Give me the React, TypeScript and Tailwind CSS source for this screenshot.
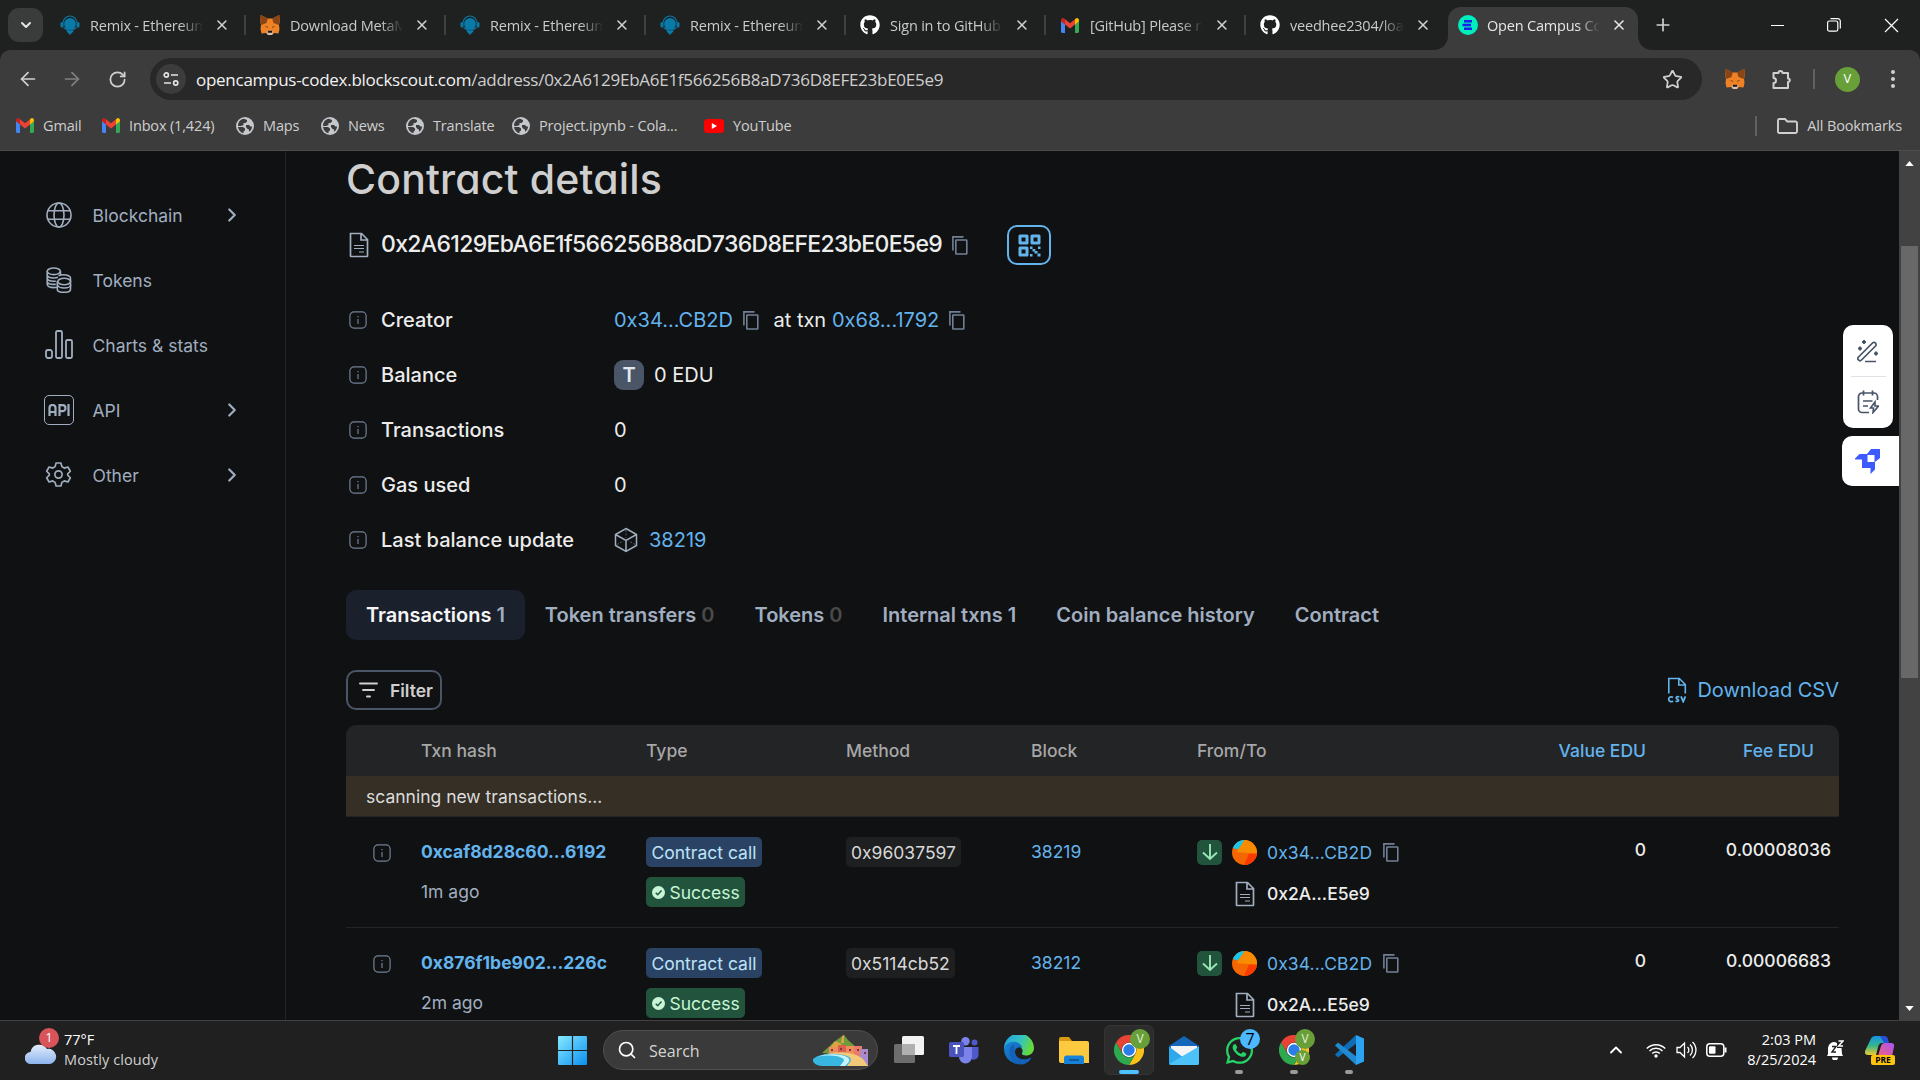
import React from "react";
import {
  ArrowLeft,
  ArrowRight,
  ChevronDown,
  ChevronRight,
  ChevronUp,
  Plus,
  RotateCw,
  Search,
  Star,
  X,
} from "lucide-react";
import { FaGithub, FaWhatsapp } from "react-icons/fa";

/* ---------- Brand marks ---------- */

const RemixLogo = () => (
  <svg viewBox="0 0 20 20" className="size-5 shrink-0">
    <path d="M3 8a7 7 0 0 1 14 0" fill="none" stroke="#0a7aa8" strokeWidth="1.2" />
    <rect x="0.5" y="7" width="3" height="5.5" rx="1.5" fill="#0a7aa8" />
    <rect x="16.5" y="7" width="3" height="5.5" rx="1.5" fill="#0a7aa8" />
    <circle cx="10" cy="9" r="5.9" fill="#0a7aa8" />
    <path d="M3.5 12.5 10 16.5l6.500-4" fill="none" stroke="#0a7aa8" strokeWidth="1.2" />
    <path d="M6 15.800h8L10 20z" fill="#0a7aa8" />
  </svg>
);

const FoxLogo = () => (
  <svg viewBox="0 0 20 20" className="size-5 shrink-0">
    <path d="M.8 0 7.500 3.500h5L19.200 0 19.800 6 19 10l.5 4-1 4.500-4.500-.5-2 2H8l-2-2-4.500.5-1-4.500.5-4L.2 6z" fill="#f08226" />
    <path d="M.8 0 7.800 3.600 6.500 8 1.500 10 .2 6zM19.200 0 12.200 3.600l1.300 4.400 5 2 1.300-4z" fill="#8a4517" />
    <path d="m4.500 11 3.200.4.300 1.800zM15.500 11l-3.200.4-.3 1.800z" fill="#8a4a1c" />
    <path d="m6.500 17 1.500-1.300h4l1.500 1.300-1.500 3H8z" fill="#d7c1b3" />
    <path d="M8 15.700h4l.3 2H7.700z" fill="#161616" />
  </svg>
);

const GmailLogo = () => (
  <svg viewBox="0 0 18 14" className="h-[15px] w-[18px] shrink-0" preserveAspectRatio="none">
    <path d="M0 2.500V12.700A1.300 1.300 0 0 0 1.300 14H4V5.300z" fill="#4285f4" />
    <path d="M18 2.500V12.700a1.300 1.300 0 0 1-1.300 1.300H14V5.300z" fill="#34a853" />
    <path d="M14 1.200V6l4-3V2a2 2 0 0 0-3.200-1.500z" fill="#fbbc04" />
    <path d="M4 6V1.200l5 3.800 5-3.800V6L9 9.800z" fill="#ea4335" />
    <path d="M0 2v1l4 3V1.200L3.200.500A2 2 0 0 0 0 2z" fill="#c5221f" />
  </svg>
);

const GlobeMark = () => (
  <svg viewBox="0 0 18 18" className="size-[18px] shrink-0">
    <circle cx="9" cy="9" r="9" fill="#c4c7cc" />
    <path d="M8 1.800 11 3v1.500L9.500 6H7.500v2L5 9H2.200L2 8C2.500 4.500 5 2 8 1.800zM2 10h5l2 1.500v2L7.500 14.500v1.800C4.500 15.500 2.300 13 2 10z" fill="#3c3c3c" />
    <path d="M10 8h3l1.500 1.500h1.700A7 7 0 0 1 13 14.800V12.500L11.500 12 10 10z" fill="#3c3c3c" />
  </svg>
);

const YouTubeLogo = () => (
  <svg viewBox="0 0 20 14" className="h-[14px] w-5 shrink-0">
    <rect width="20" height="14" rx="3.500" fill="#f00" />
    <path d="M7.800 4v6l5.200-3z" fill="#fff" />
  </svg>
);

const OpenCampusLogo = () => (
  <svg viewBox="0 0 20 20" className="size-5 shrink-0">
    <circle cx="10" cy="10" r="10" fill="#00edbe" />
    <path d="M6 5h8v2.600H6zM4.500 8.700h8.500v2.600H4.500zM6 12.400h8V15H6z" fill="#1a1fe8" />
  </svg>
);

/* ---------- Page glyphs ---------- */

const InfoIcon = () => (
  <svg viewBox="0 0 18 18" className="mt-px size-[18px] shrink-0" fill="none" stroke="#718096">
    <rect x="0.900" y="0.900" width="16.200" height="16.200" rx="4" strokeWidth="1.200" />
    <path d="M9 8v5M9 5v1.200" strokeWidth="1.200" />
  </svg>
);

const CopyIcon = () => (
  <svg viewBox="0 0 16 19" className="mt-px h-[19px] w-4 shrink-0" fill="none" stroke="#718096" strokeWidth="1.600">
    <path d="M.900 14.500V.900H11.500" />
    <rect x="3.800" y="4" width="11" height="14" rx=".5" />
  </svg>
);

const DocIcon = () => (
  <svg viewBox="0 0 20 26" className="h-[26px] w-5 shrink-0" fill="none" stroke="#a0aec0" strokeWidth="1.700">
    <path d="M1.500 1.500h11l6 6V24a.5.5 0 0 1-.5.5H2a.5.5 0 0 1-.5-.5zM12 1.500V8h6.500" />
    <path d="M5 13.500h10M5 16.500h10M10 20h5" strokeWidth="1.200" />
  </svg>
);

const CsvIcon = () => (
  <svg viewBox="0 0 20 26" className="h-[26px] w-5 shrink-0" fill="none" stroke="#63b3ed" strokeWidth="1.600">
    <path d="M1.800 16.500V1.500h10.500l6 6v9M11.800 1.500V8h6.500" />
    <path d="M6 20.500c-2-1.500-4.300-.3-4.300 1.800s2.300 3.200 4.300 1.700M12.300 20c-3.300-1-3.800 1.500-2 2s1.800 3-1.800 2.200M14 19.300l2.200 5.300 2.200-5.300" strokeWidth="1.800" />
  </svg>
);

const CubeIcon = () => (
  <svg viewBox="0 0 24 26" className="h-[26px] w-6 shrink-0" fill="none" stroke="#a0aec0" strokeWidth="1.500">
    <path d="M12 1.500 22.500 7.500v11L12 24.500 1.500 18.500v-11zM1.500 7.500 12 13.500l10.500-6M12 13.500v11" />
    <path d="M12 3v8M3 17.500l6.500-3.700M21 17.500l-6.500-3.700" strokeWidth=".5" strokeDasharray="2 1.500" />
  </svg>
);

const QrIcon = () => (
  <svg viewBox="0 0 23 23" className="size-[23px]" fill="#63b3ed">
    <path fillRule="evenodd" d="M2 .5h7A1.500 1.500 0 0 1 10.500 2v7A1.500 1.500 0 0 1 9 10.500H2A1.500 1.500 0 0 1 .5 9V2A1.500 1.500 0 0 1 2 .5zM3.500 3.500v4h4v-4zM14 .5h7A1.500 1.500 0 0 1 22.500 2v7a1.500 1.500 0 0 1-1.500 1.500h-7A1.500 1.500 0 0 1 12.500 9V2A1.500 1.500 0 0 1 14 .5zM15.500 3.500v4h4v-4zM2 12.500h7a1.500 1.500 0 0 1 1.500 1.500v7A1.500 1.500 0 0 1 9 22.500H2A1.500 1.500 0 0 1 .5 21v-7A1.500 1.500 0 0 1 2 12.500zM3.500 15.500v4h4v-4z" />
    <path d="M12 12.500h2.500V15H12zM20 12.500h2.500V15H20zM14.500 15h2.800v2h2.200v2.500h-3V17.500h-2zM12 20h2.500v2.500H12zM19.500 19.500h3v3h-3z" />
  </svg>
);

const BlockchainIcon = () => (
  <svg viewBox="0 0 26 26" className="size-[26px]" fill="none" stroke="#a0aec0" strokeWidth="1.600">
    <circle cx="13" cy="13" r="12" />
    <ellipse cx="13" cy="13" rx="5" ry="12" />
    <path d="M2 8.700h22M2 17.300h22" />
  </svg>
);

const TokensIcon = () => (
  <svg viewBox="0 0 26 26" className="size-[26px]" fill="none" stroke="#a0aec0" strokeWidth="1.600">
    <ellipse cx="7.800" cy="4.300" rx="6.600" ry="3.300" />
    <path d="M1.200 4.300v13c0 1.900 3 3.300 6.600 3.300 1 0 2-.1 3-.4M14.400 4.300v4M1.200 7.800c0 1.900 3 3.200 6.600 3.200 1.500 0 3-.2 4.200-.7M1.200 11c0 1.900 3 3.200 6.600 3.200h2M1.200 14.200c0 1.900 3 3.200 6.600 3.200h2" />
    <path d="M12.500 8.800c4-2 12-1 12 2.400v11c0 1.900-3 3.200-6.600 3.200s-6.600-1.300-6.600-3.200V14" />
    <ellipse cx="18.200" cy="14.500" rx="6.400" ry="3.300" />
    <path d="M11.600 17.700c0 1.900 3 3.300 6.600 3.300s6.600-1.400 6.600-3.300" />
  </svg>
);

const ChartsIcon = () => (
  <svg viewBox="0 0 28 29" className="h-[29px] w-7" fill="none" stroke="#a0aec0" strokeWidth="1.800">
    <rect x="1" y="20" width="6" height="8" rx="2" />
    <rect x="11" y="1" width="6" height="27" rx="1.500" />
    <rect x="21" y="10" width="6" height="18" rx="1.500" />
  </svg>
);

const ApiIcon = () => (
  <div className="flex h-[30px] w-[30px] items-center justify-center rounded-[5px] border-[1.5px] border-[#a0aec0]">
    <svg viewBox="0 0 22 12" className="h-3 w-[22px]" fill="none" stroke="#a0aec0" strokeWidth="2.200">
      <path d="M1.500 12V4a3 3 0 0 1 6 0v8M1.500 8h6M11.500 12V1.200h3a2.500 2.500 0 0 1 0 6h-3M20.500 0v12" />
    </svg>
  </div>
);

const GearIcon = () => (
  <svg viewBox="0 0 24 24" className="size-[29px]" fill="none" stroke="#a0aec0" strokeWidth="1.400" strokeLinejoin="round">
    <path d="M10 2.500h4l.8 3 2 1.200 3-.9 2 3.500-2.200 2.100v1.200l2.200 2.100-2 3.500-3-.9-2 1.200-.8 3h-4l-.8-3-2-1.200-3 .9-2-3.500 2.200-2.100v-1.200L2.200 9.300l2-3.500 3 .9 2-1.200z" />
    <circle cx="12" cy="12" r="3" />
  </svg>
);

const CheckMark = () => (
  <svg viewBox="0 0 14 14" className="size-[13px]">
    <circle cx="7" cy="7" r="7" fill="#c6f6d5" />
    <path d="m4 7.200 2.200 2.200 4-4.500" fill="none" stroke="#22543d" strokeWidth="1.600" />
  </svg>
);

const Identicon = () => (
  <div className="size-[25px] overflow-hidden rounded-full">
    <svg viewBox="0 0 25 25" className="size-[25px]">
      <rect width="25" height="25" fill="#f56600" />
      <path d="M12 0h13v14L4.500 12z" fill="#f78c00" />
      <path d="M0 0h12.500L6 9.500 1 8z" fill="#18c8ee" />
      <path d="M17 13.500h8V25H12z" fill="#fb3a00" />
    </svg>
  </div>
);

/* ---------- Browser chrome ---------- */

const tabs = [
  { title: "Remix - Ethereum IDE", icon: <RemixLogo /> },
  { title: "Download MetaMask", icon: <FoxLogo /> },
  { title: "Remix - Ethereum IDE", icon: <RemixLogo /> },
  { title: "Remix - Ethereum IDE", icon: <RemixLogo /> },
  { title: "Sign in to GitHub · GitHub", icon: <FaGithub className="size-5 text-white" /> },
  { title: "[GitHub] Please reset", icon: <GmailLogo /> },
  { title: "veedhee2304/loan", icon: <FaGithub className="size-5 text-white" /> },
];

const fade = "[mask-image:linear-gradient(to_right,black_80%,transparent_100%)]";

function TabStrip() {
  return (
    <div className="flex h-[50px] bg-[#1f2120] pl-2">
      <div className="mt-2 flex h-[34px] w-[35px] items-center justify-center rounded-[11px] bg-[#3a3b3b]">
        <ChevronDown className="size-4 text-[#e3e3e3]" strokeWidth={3} />
      </div>
      <div className="ml-[3px] flex w-[1402px]">
        {tabs.map((t, i) => (
          <div key={i} className="flex h-[50px] w-[200px] shrink-0 items-center pl-[14px]">
            <div className="flex w-5 justify-center">{t.icon}</div>
            <div className={"ml-[10px] w-[114px] overflow-hidden whitespace-nowrap pt-px text-[14.5px] tracking-[-0.2px] text-[#c8c9c9] " + fade}>{t.title}</div>
            <X className="ml-[11px] size-[16px] text-[#d0d0d0]" strokeWidth={2.4} />
            {i < 6 && <div className="ml-[14px] h-5 w-0.5 bg-[#3f4040]" />}
          </div>
        ))}
      </div>
      <div className="relative mt-[7px] flex h-[43px] w-[190px] items-center rounded-t-[13px] bg-[#3c3c3c] pb-[7px] pl-[10px]">
        <svg viewBox="0 0 14 14" className="absolute -left-[14px] bottom-0 size-[14px]"><path d="M14 0v14H0A14 14 0 0 0 14 0z" fill="#3c3c3c" /></svg>
        <svg viewBox="0 0 14 14" className="absolute -right-[14px] bottom-0 size-[14px]"><path d="M0 0v14h14A14 14 0 0 1 0 0z" fill="#3c3c3c" /></svg>
        <OpenCampusLogo />
        <div className={"ml-[9px] w-[113px] overflow-hidden whitespace-nowrap pt-px text-[14.5px] tracking-[-0.2px] text-[#e6e6e6] " + fade}>Open Campus Codex</div>
        <X className="ml-[11px] size-[16px] text-[#e6e6e6]" strokeWidth={2.4} />
      </div>
      <Plus className="ml-[15px] mt-[15px] size-5 text-[#d0d0d0]" strokeWidth={2} />
      <div className="ml-auto mr-[21px] flex items-center gap-[43px]">
        <div className="h-px w-[13px] bg-white" />
        <svg viewBox="0 0 14 14" className="size-[14px]" fill="none" stroke="#fff" strokeWidth="1.200">
          <rect x="0.600" y="3" width="10.200" height="10.200" rx="1.800" />
          <path d="M3.500.700h7.300a2.500 2.500 0 0 1 2.500 2.500v7.300" />
        </svg>
        <svg viewBox="0 0 15 15" className="size-[15px]" stroke="#fff" strokeWidth="1.200"><path d="m1 1 13 13M14 1 1 14" /></svg>
      </div>
    </div>
  );
}

function Toolbar() {
  return (
    <div className="bg-[#1f2120]">
      <div className="flex h-[50px] items-center rounded-t-[10px] bg-[#3c3c3c] pt-2">
        <ArrowLeft className="ml-[17px] size-[22px] text-[#d0d0d0]" strokeWidth={1.900} />
        <ArrowRight className="ml-[22px] size-[22px] text-[#808080]" strokeWidth={1.900} />
        <RotateCw className="ml-[25px] size-[19px] text-[#d0d0d0]" strokeWidth={2.200} />
        <div className="ml-[23px] flex h-[42px] w-[1552px] items-center rounded-full bg-[#282828] pl-[6px]">
          <div className="flex size-[30px] items-center justify-center rounded-full bg-[#3c3c3c]">
            <svg viewBox="0 0 16 16" className="size-4" fill="none" stroke="#e3e3e3" strokeWidth="1.700">
              <circle cx="3.300" cy="4" r="2.100" />
              <path d="M8 4h7M1 12h7" />
              <circle cx="12.700" cy="12" r="2.100" />
            </svg>
          </div>
          <div className="ml-[10px] whitespace-nowrap pt-px text-[17px] tracking-[-0.27px] text-[#cfcfcf]">
            <span className="text-[#f2f2f2]">opencampus-codex.blockscout.com</span>/address/0x2A6129EbA6E1f566256B8aD736D8EFE23bE0E5e9
          </div>
          <Star className="ml-auto mr-[19px] size-[21px] text-[#d0d0d0]" strokeWidth={2} />
        </div>
        <div className="ml-[23px]"><FoxLogo /></div>
        <svg viewBox="0 0 22 22" className="ml-[26px] size-[22px]" fill="none" stroke="#d0d0d0" strokeWidth="2">
          <path d="M2.500 5H7.500a2 2 0 0 1 4 0H17v5.500a1.700 1.700 0 0 1 0 3.600V20H2.500v-5a2.500 2.500 0 0 0 0-5z" strokeLinejoin="round" />
        </svg>
        <div className="ml-5 h-5 w-0.5 bg-[#5f6060]" />
        <div className="ml-5 flex size-[25px] items-center justify-center rounded-full bg-[#689f38] text-[13px] text-white">V</div>
        <div className="ml-[31px] flex flex-col gap-[3px]">
          {[0, 1, 2].map((i) => <div key={i} className="size-1 rounded-full bg-[#d0d0d0]" />)}
        </div>
      </div>
    </div>
  );
}

const bookmarks = [
  { label: "Gmail", icon: <GmailLogo />, box: "w-[86px]" },
  { label: "Inbox (1,424)", icon: <GmailLogo />, box: "w-[134px]" },
  { label: "Maps", icon: <GlobeMark />, box: "w-[85px]" },
  { label: "News", icon: <GlobeMark />, box: "w-[85px]" },
  { label: "Translate", icon: <GlobeMark />, box: "w-[106px]" },
  { label: "Project.ipynb - Cola...", icon: <GlobeMark />, box: "w-[192px]" },
  { label: "YouTube", icon: <YouTubeLogo />, box: "w-[120px]" },
];

function Bookmarks() {
  return (
    <div className="flex h-[51px] items-center border-b border-[#4b4c4c] bg-[#3c3c3c] pl-4 pt-px text-[14.500px] text-[#cfcfcf]">
      {bookmarks.map((b) => (
        <div key={b.label} className={"flex shrink-0 items-center gap-[9px] whitespace-nowrap tracking-[-0.15px] " + b.box}>
          {b.icon}
          <span>{b.label}</span>
        </div>
      ))}
      <div className="ml-auto flex items-center">
        <div className="h-5 w-0.5 bg-[#5f6060]" />
        <svg viewBox="0 0 21 16" className="ml-5 h-4 w-[21px]" fill="none" stroke="#d0d0d0" strokeWidth="1.900">
          <path d="M1 13V2.500A1.500 1.500 0 0 1 2.500 1H8l2.300 2.500h8A1.500 1.500 0 0 1 20 5v8.500a1.500 1.500 0 0 1-1.500 1.500h-16A1.500 1.500 0 0 1 1 13z" />
        </svg>
        <span className="ml-[9px] mr-[18px] whitespace-nowrap tracking-[-0.15px]">All Bookmarks</span>
      </div>
    </div>
  );
}

/* ---------- Explorer page ---------- */

const nav = [
  { label: "Blockchain", icon: <BlockchainIcon />, more: true },
  { label: "Tokens", icon: <TokensIcon />, more: false },
  { label: "Charts & stats", icon: <ChartsIcon />, more: false },
  { label: "API", icon: <ApiIcon />, more: true },
  { label: "Other", icon: <GearIcon />, more: true },
];

function Sidebar() {
  return (
    <div className="flex w-[286px] shrink-0 flex-col border-r border-[#222324] pt-[31px]">
      {nav.map((n) => (
        <div key={n.label} className="flex h-[65px] items-center pl-[43.5px] text-[#a0aec0]">
          <div className="flex w-[30px] justify-center">{n.icon}</div>
          <div className="ml-[19px] w-32 pt-[3px] text-[17.500px]">{n.label}</div>
          {n.more && <ChevronRight className="size-[22px]" strokeWidth={2.400} />}
        </div>
      ))}
    </div>
  );
}

const details: { label: string; value: React.ReactNode }[] = [
  {
    label: "Creator",
    value: (
      <>
        <span className="w-[128.5px] text-[#63b3ed]">0x34...CB2D</span>
        <CopyIcon />
        <span className="ml-[15px] w-[58.5px]">at txn</span>
        <span className="w-[116.5px] text-[#63b3ed]">0x68...1792</span>
        <CopyIcon />
      </>
    ),
  },
  {
    label: "Balance",
    value: (
      <>
        <span className="mr-[10px] flex size-[30px] items-center justify-center rounded-[9px] bg-[#4a5568] font-semibold text-[#e2e8f0]">T</span>
        0 EDU
      </>
    ),
  },
  { label: "Transactions", value: "0" },
  { label: "Gas used", value: "0" },
  {
    label: "Last balance update",
    value: (
      <>
        <CubeIcon />
        <span className="ml-[11px] text-[#63b3ed]">38219</span>
      </>
    ),
  },
];

const pageTabs = [
  { label: "Transactions", count: "1", tone: "text-[#a0aec0]", box: "bg-[#1a202c] text-[#f5f5f5]" },
  { label: "Token transfers", count: "0", tone: "text-[#4a4a4b]", box: "text-[#a0aec0]" },
  { label: "Tokens", count: "0", tone: "text-[#4a4a4b]", box: "text-[#a0aec0]" },
  { label: "Internal txns", count: "1", tone: "text-[#a0aec0]", box: "text-[#a0aec0]" },
  { label: "Coin balance history", count: "", tone: "", box: "text-[#a0aec0]" },
  { label: "Contract", count: "", tone: "", box: "text-[#a0aec0]" },
];

const rows = [
  { hash: "0xcaf8d28c60...6192", ago: "1m ago", method: "0x96037597", block: "38219", fee: "0.00008036" },
  { hash: "0x876f1be902...226c", ago: "2m ago", method: "0x5114cb52", block: "38212", fee: "0.00006683" },
];

const cols = "grid grid-cols-[75px_225px_200px_185px_166px_449px_193px]";

function TxRow({ r }: { r: (typeof rows)[number] }) {
  return (
    <div className={cols + " h-[111px] border-b border-[#242526] pt-5 text-[17.500px] leading-[30px]"}>
      <div className="pl-[26.5px] pt-[6px]"><InfoIcon /></div>
      <div>
        <div className="font-bold text-[#63b3ed]">{r.hash}</div>
        <div className="mt-[10px] text-[#a0aec0]">{r.ago}</div>
      </div>
      <div className="flex flex-col items-start gap-[10px]">
        <div className="h-[30px] rounded-[5px] bg-[#2a4365] px-[5.5px] pt-px text-[#bee3f8]">Contract call</div>
        <div className="flex h-[30px] items-center gap-[5px] rounded-[5px] bg-[#22543d] px-[5.5px] pt-px text-[#c6f6d5]">
          <CheckMark />Success
        </div>
      </div>
      <div>
        <div className="inline-block h-[30px] rounded-[5px] bg-[#1e1f20] px-[5px] pt-px text-[#d8d8d8]">{r.method}</div>
      </div>
      <div className="text-[#63b3ed]">{r.block}</div>
      <div className="flex justify-between">
        <div>
          <div className="flex h-[30px] items-center">
            <div className="flex size-[25px] items-center justify-center rounded-[5px] bg-[#22543d]">
              <svg viewBox="0 0 16 18" className="h-[18px] w-4" fill="none" stroke="#9ae6b4" strokeWidth="1.900"><path d="M8 1v15M1 9.500l7 6.500 7-6.500" /></svg>
            </div>
            <div className="ml-[10px] mr-[10px]"><Identicon /></div>
            <span className="w-[116px] pt-px tracking-[0.1px] text-[#63b3ed]">0x34...CB2D</span>
            <CopyIcon />
          </div>
          <div className="mt-3 flex h-[30px] items-center pl-[38px]">
            <DocIcon />
            <span className="ml-3 font-medium text-[#ececec]">0x2A...E5e9</span>
          </div>
        </div>
        <div className="-mt-[2px] font-medium text-[#ececec]">0</div>
      </div>
      <div className="-mt-[2px] pr-2 text-right font-medium text-[#ececec]">{r.fee}</div>
    </div>
  );
}

function Content() {
  return (
    <div className="w-[1493px]">
      <h1 className="h-[56px] whitespace-nowrap text-[41px] font-medium leading-[56px] tracking-[0.15px] text-[#cfcfcf] [font-feature-settings:'cv11']">Contract details</h1>
      <div className="mt-[18px] flex h-10 items-center pl-[3px]">
        <DocIcon />
        <span className="ml-3 w-[571px] whitespace-nowrap pb-0.5 text-[23px] font-medium tracking-[-0.67px] text-[#ececec] [font-feature-settings:'cv11']">0x2A6129EbA6E1f566256B8aD736D8EFE23bE0E5e9</span>
        <CopyIcon />
        <div className="ml-[39px] flex h-10 w-11 items-center justify-center rounded-[10px] border-2 border-[#63b3ed]"><QrIcon /></div>
      </div>
      <div className="mt-[27px] text-xl text-[#ececec]">
        {details.map((d) => (
          <div key={d.label} className="flex h-[55px] items-center pl-[3px]">
            <InfoIcon />
            <div className="ml-[14px] w-[233px] font-medium">{d.label}</div>
            <div className="flex items-center whitespace-nowrap">{d.value}</div>
          </div>
        ))}
      </div>
      <div className="mt-[23px] flex text-xl font-semibold">
        {pageTabs.map((t) => (
          <div key={t.label} className={"flex h-[50px] items-center gap-[5px] whitespace-nowrap rounded-[10px] px-5 " + t.box}>
            {t.label}
            {t.count && <span className={t.tone}>{t.count}</span>}
          </div>
        ))}
      </div>
      <div className="mt-[30px] flex h-10 items-center justify-between">
        <div className="flex h-10 w-24 items-center rounded-[10px] border-2 border-[#4a5568] pl-[11px] text-[17.500px] font-semibold text-[#cfcfcf]">
          <svg viewBox="0 0 19 16" className="h-4 w-[19px]" stroke="#cfcfcf" strokeWidth="1.900" strokeLinecap="round"><path d="M1 1.500h17M4 8h11M8 14.500h3" /></svg>
          <span className="ml-[12px] pt-[2px]">Filter</span>
        </div>
        <div className="flex items-center gap-[10px] text-xl text-[#63b3ed]">
          <CsvIcon />Download CSV
        </div>
      </div>
      <div className={cols + " mt-[15px] h-[51px] items-center rounded-t-[10px] bg-[#232425] pt-[2px] text-[17.500px] font-medium text-[#a7a7a8]"}>
        <div />
        <div>Txn hash</div>
        <div>Type</div>
        <div>Method</div>
        <div>Block</div>
        <div className="flex justify-between"><span>From/To</span><span className="text-[#63b3ed]">Value EDU</span></div>
        <div className="pr-[25px] text-right text-[#63b3ed]">Fee EDU</div>
      </div>
      <div className="flex h-[41px] items-center border-b border-[#242526] bg-[#352f25] pl-5 pt-[2px] text-[17.500px] text-[#dcdcdc]">scanning new transactions...</div>
      {rows.map((r) => <TxRow key={r.hash} r={r} />)}
    </div>
  );
}

function SideWidgets() {
  return (
    <div className="absolute right-0 top-[174px] flex flex-col items-end gap-2">
      <div className="mr-[6px] flex h-[103px] w-[50px] flex-col items-center justify-between rounded-[10px] bg-white py-[14px]">
        <svg viewBox="0 0 22 24" className="h-6 w-[22px]" fill="none" stroke="#475467" strokeWidth="1.700">
          <path d="m1.500 18 14-14a2 2 0 0 1 3 3l-14 14a2.100 2.100 0 0 1-3-3zM8 22.500h11" strokeLinejoin="round" />
          <path d="M7 1v4M5 3h4M3 7.500v4M1 9.500h4M19 12.500v4M17 14.500h4" strokeWidth="1.900" />
        </svg>
        <div className="h-px w-[35px] bg-[#dfe3e8]" />
        <svg viewBox="0 0 22 24" className="h-6 w-[22px]" fill="none" stroke="#475467" strokeWidth="1.700">
          <path d="M12 22.500H5a3.500 3.500 0 0 1-3.500-3.500V6.500A3.500 3.500 0 0 1 5 3h12a3.500 3.500 0 0 1 3.500 3.500V10M6.500.5v5M15.500.5v5M6 11h9.500M6 16h5" />
          <path d="m18 12-4.500 6h3l-.5 4.500 5.500-6.500h-3.500z" strokeWidth="1.600" />
        </svg>
      </div>
      <div className="flex h-[50px] w-[57px] items-center rounded-l-[10px] bg-white pl-[13px]">
        <svg viewBox="0 0 25 25" className="size-[25px]">
          <path d="M0 9.500 4.500 5H12l4-5h9v9l-5 4v7.500L15.500 25v-6H7v-8.500H0z" fill="#3d5afe" />
          <path d="M12.500 6h7v7h-7z" fill="#fff" />
        </svg>
      </div>
    </div>
  );
}

function Scrollbar() {
  return (
    <div className="flex w-[21px] shrink-0 flex-col items-center bg-[#424242]">
      <svg viewBox="0 0 10 6" className="mt-[10px] h-[5px] w-[9px]"><path d="M0 6 5 0l5 6z" fill="#fff" /></svg>
      <div className="mt-20 h-[432px] w-[17px] bg-[#686868]" />
      <svg viewBox="0 0 10 6" className="mb-[9px] mt-auto h-[5px] w-[9px]"><path d="m0 0 5 6 5-6z" fill="#fff" /></svg>
    </div>
  );
}

/* ---------- Taskbar ---------- */

const ChromeLogo = () => (
  <svg viewBox="0 0 30 30" className="size-[30px]">
    <path d="M2 7.500A15 15 0 0 1 28 7.500H15A7.500 7.500 0 0 0 8.500 18.700z" fill="#ea4335" />
    <path d="M28 7.500A15 15 0 0 1 15 30l6.500-11.300A7.500 7.500 0 0 0 15 7.500z" fill="#fbc116" />
    <path d="M15 30A15 15 0 0 1 2 7.500l6.500 11.200a7.500 7.500 0 0 0 13 0z" fill="#2da94f" />
    <circle cx="15" cy="15" r="7.200" fill="#fff" />
    <circle cx="15" cy="15" r="5.700" fill="#2b7de9" />
  </svg>
);

const WindowsLogo = () => (
  <svg viewBox="0 0 29 29" className="size-[29px]">
    <defs><linearGradient id="win" x1="0" y1="0" x2="1" y2="1"><stop stopColor="#86eaff" /><stop offset="1" stopColor="#0a8ff0" /></linearGradient></defs>
    <path d="M1 0h12.900v13.900H0V1a1 1 0 0 1 1-1zM15.100 0H28a1 1 0 0 1 1 1v12.900H15.100zM0 15.100h13.900V29H1a1 1 0 0 1-1-1zM15.100 15.100H29V28a1 1 0 0 1-1 1H15.100z" fill="url(#win)" />
  </svg>
);

const BeachArt = () => (
  <svg viewBox="0 0 57 31" className="h-[31px] w-[57px]">
    <path d="M9 18 21 7l4-3 6-4 4 5 8 7 4 8z" fill="#6f9b3d" />
    <path d="M29 1 31 0v8h-3zM22 6l7 3-5 5h-8z" fill="#d9a441" />
    <path d="M16 12h9v10h-9zM33 11h8v11h-8z" fill="#ef8c5a" />
    <path d="M25 10h8v12h-8z" fill="#d9604c" />
    <path d="M41 11h8v12h-8z" fill="#e77b6c" />
    <path d="M48 14h7v17h-9z" fill="#a78bd0" />
    <path d="M18 14h2v2h-2zM27 13h2v2h-2zM36 14h2v2h-2zM44 14h2v2h-2zM51 17h2v2h-2z" fill="#7c3540" />
    <path d="M10 20c15-5 32-3 40 4l5 7H30z" fill="#f2c879" />
    <path d="M0 24c8-7 26-6 34-3 7 3 3 6 0 10H8C2 30-1 27 0 24z" fill="#37b6e0" />
    <path d="M4 22c10-4 24-3 30 0 5 3 1 6-2 9h-5c3-4 6-6 2-8-6-3-17-3-25-1z" fill="#c9f2fa" />
  </svg>
);

const TaskViewIcon = () => (
  <svg viewBox="0 0 30 28" className="h-7 w-[30px]">
    <rect x="0" y="8" width="21" height="19" rx="1.500" fill="#6d6d6d" />
    <rect x="8" y="0" width="22" height="19" rx="1.500" fill="#f2f2f2" />
    <path d="M8 8h13v11H8z" fill="#b0b0b0" />
  </svg>
);

const TeamsLogo = () => (
  <svg viewBox="0 0 30 27" className="h-[27px] w-[30px]">
    <circle cx="25.500" cy="5.500" r="3" fill="#5059c9" />
    <circle cx="16.500" cy="4.300" r="4.200" fill="#7b83eb" />
    <path d="M22 10h7.500v8a5 5 0 0 1-7.500 4z" fill="#5059c9" />
    <path d="M10 10h13v10a6.500 6.500 0 0 1-13 0z" fill="#7b83eb" />
    <rect x="0" y="5" width="15" height="15" rx="1.500" fill="#4b53bc" />
    <path d="M4 9h7M7.500 9v8" stroke="#fff" strokeWidth="1.800" />
  </svg>
);

const EdgeLogo = () => (
  <svg viewBox="0 0 30 30" className="size-[30px]">
    <defs>
      <linearGradient id="edgeTop" x1="0" y1="0" x2="1" y2=".3"><stop stopColor="#1fa0e6" /><stop offset=".6" stopColor="#35c3c0" /><stop offset="1" stopColor="#64d93d" /></linearGradient>
      <linearGradient id="edgeBottom" x1="0" y1="0" x2="1" y2="1"><stop stopColor="#1b86d8" /><stop offset="1" stopColor="#0c4fa3" /></linearGradient>
    </defs>
    <path d="M0 14A15 15 0 0 1 30 13c0 5-4 7.500-8 7.500-3 0-4.500-1-4-2.500 2-3-1-7-6-7C6 11 1 14 0 14z" fill="url(#edgeTop)" />
    <path d="M0 14c1-5 6-8 12-7 4 1 6 4 6 6-4-2-7 1-7 4 0 5 6 9 12 7l4.500-1.500A15 15 0 0 1 0 14z" fill="url(#edgeBottom)" />
    <path d="M10 9c-4 2-5 6-4 10 1 5 6 10 12 10.500 5-.5 8-4 9.500-7C20 27 10 24 11 16z" fill="#1262b8" />
  </svg>
);

const ExplorerIcon = () => (
  <svg viewBox="0 0 30 27" className="h-[27px] w-[30px]">
    <path d="M0 2a2 2 0 0 1 2-2h8l3 4H0z" fill="#d79a11" />
    <path d="M0 4h28a2 2 0 0 1 2 2v20H2a2 2 0 0 1-2-2z" fill="#fdc93e" />
    <path d="M5 27v-6a2.500 2.500 0 0 1 2.500-2.500h15A2.500 2.500 0 0 1 25 21v6z" fill="#1783d8" />
    <path d="M10 23h10" stroke="#0b4d8c" strokeWidth="1.500" />
  </svg>
);

const MailIcon = () => (
  <svg viewBox="0 0 30 29" className="h-[29px] w-[30px]">
    <path d="M0 10 15 0l15 10v8H0z" fill="#1466b8" />
    <path d="M2 10h26v8L15 22 2 18z" fill="#f4f4f4" />
    <path d="M0 10.500 15 22 30 10.500V27a2 2 0 0 1-2 2H2a2 2 0 0 1-2-2z" fill="#2da8ec" />
    <path d="M0 28 30 10.500V27a2 2 0 0 1-2 2H2z" fill="#4cc2f8" />
  </svg>
);

const VSCodeLogo = () => (
  <svg viewBox="0 0 30 30" className="size-[30px]">
    <path d="m22 0 1 8L4 22.500l-3-3z" fill="#0f6db5" />
    <path d="m22 30 1-8L4 7.500l-3 3z" fill="#1f8ad2" />
    <path d="m22 0 8 3.500v23L22 30z" fill="#2ba3f0" />
  </svg>
);

const Badge = ({ text, pos }: { text: string; pos: string }) => (
  <div className={"absolute flex items-center justify-center rounded-full " + pos}>{text}</div>
);

function Taskbar() {
  const slot = "relative flex h-[50px] w-[50px] shrink-0 items-center justify-center";
  return (
    <div className="flex h-[60px] items-center border-t border-[#424242] bg-[#202020] pb-px text-[15px] text-white">
      <div className="relative ml-[25px] h-8 w-8">
        <svg viewBox="0 0 32 32" className="size-8">
          <defs><linearGradient id="cloud" x1="0" y1="0" x2="0" y2="1"><stop stopColor="#e4edfb" /><stop offset="1" stopColor="#8db4ee" /></linearGradient></defs>
          <path d="M6 30a6 6 0 0 1-.5-12A9 9 0 0 1 22 15a7.500 7.500 0 0 1 3 15z" fill="url(#cloud)" />
        </svg>
        <Badge text="1" pos="-top-[6px] left-[14px] size-5 bg-[#d9535a] text-[13px]" />
      </div>
      <div className="ml-[7px] w-[490px] text-[14.500px] leading-5">
        <div>77°F</div>
        <div className="tracking-[0.1px] text-[#d0d0d0]">Mostly cloudy</div>
      </div>
      <div className="ml-1"><WindowsLogo /></div>
      <div className="ml-4 flex h-10 w-[275px] items-center rounded-full border border-[#505050] bg-[#3a3a3a] pl-[13px]">
        <Search className="size-5 text-white" strokeWidth={2} />
        <span className="ml-3 pt-px text-base text-[#d4d4d4]">Search</span>
        <div className="ml-auto mr-[7px]"><BeachArt /></div>
      </div>
      <div className="ml-[6px] flex gap-[5px]">
        <div className={slot}><TaskViewIcon /></div>
        <div className={slot}><TeamsLogo /></div>
        <div className={slot}><EdgeLogo /></div>
        <div className={slot}><ExplorerIcon /></div>
        <div className={slot + " rounded-md border border-[#343434] bg-[#2c2c2c]"}>
          <ChromeLogo />
          <Badge text="V" pos="right-[3px] top-[3px] size-5 bg-[#689f38] text-[12px] text-[#e5efdc]" />
          <div className="absolute bottom-0 h-1 w-5 rounded-full bg-[#4cc2ff]" />
        </div>
        <div className={slot}><MailIcon /></div>
        <div className={slot}>
          <FaWhatsapp className="size-[31px] text-[#25d366]" />
          <Badge text="7" pos="right-[4px] top-[4px] size-5 bg-[#4cb8ff] text-base text-black" />
          <div className="absolute bottom-px h-1 w-2 rounded-full bg-[#9a9a9a]" />
        </div>
        <div className={slot}>
          <ChromeLogo />
          <Badge text="V" pos="right-[4px] top-[4px] size-5 bg-[#689f38] text-[12px] text-[#e5efdc]" />
          <Badge text="V" pos="right-[9px] bottom-[10px] size-[15px] bg-[#689f38] text-[10px] text-white" />
          <div className="absolute bottom-px h-1 w-2 rounded-full bg-[#9a9a9a]" />
        </div>
        <div className={slot}>
          <VSCodeLogo />
          <div className="absolute bottom-px h-1 w-2 rounded-full bg-[#9a9a9a]" />
        </div>
      </div>
      <div className="ml-auto flex items-center">
        <ChevronUp className="size-5" strokeWidth={2.200} />
        <svg viewBox="0 0 20 16" className="ml-[20px] h-4 w-5" fill="none" stroke="#fff" strokeWidth="1.500">
          <path d="M.8 6.500a13 13 0 0 1 18.400 0M3.500 9a9.200 9.200 0 0 1 13 0M6.200 11.600a5.300 5.300 0 0 1 7.600 0" />
          <circle cx="10" cy="14" r="1.700" fill="#fff" stroke="none" />
        </svg>
        <svg viewBox="0 0 21 18" className="ml-[10px] h-[18px] w-[21px]" fill="none" stroke="#fff" strokeWidth="1.300">
          <path d="M1 6.500h3L8.500 2v14L4 11.500H1zM11.500 6a4 4 0 0 1 0 6M14 3.500a7.500 7.500 0 0 1 0 11M16.500 1a11 11 0 0 1 0 16" />
        </svg>
        <svg viewBox="0 0 21 14" className="ml-[9px] h-[14px] w-[21px]" fill="none" stroke="#fff" strokeWidth="1.500">
          <rect x=".8" y=".8" width="17" height="12.400" rx="3" />
          <rect x="3" y="3.200" width="6.500" height="7.600" rx="1" fill="#fff" stroke="none" />
          <path d="M19.500 4.500v5" strokeWidth="2" />
        </svg>
        <div className="w-[89px] whitespace-nowrap text-right text-[14.500px] leading-5">
          <div>2:03 PM</div>
          <div>8/25/2024</div>
        </div>
        <svg viewBox="0 0 18 20" className="ml-[10px] h-5 w-[18px]">
          <path d="M2 9a6 6 0 0 1 9-6v5h4.500l.5 6 1 2H1l1-2zM6 17.500h6a3 3 0 0 1-6 0z" fill="#fff" />
          <path d="M6 6.500h4L6 12h4" stroke="#202020" strokeWidth="1.400" fill="none" />
          <path d="M12.500 1h4.500l-4.500 5h4.500" stroke="#fff" strokeWidth="1.400" fill="none" />
        </svg>
        <div className="relative ml-[21px] mr-[25px] size-[30px]">
          <svg viewBox="0 0 30 30" className="size-[30px]">
            <defs>
              <linearGradient id="cpA" x1="0" y1="0" x2="0" y2="1"><stop stopColor="#1593e8" /><stop offset=".5" stopColor="#34b58c" /><stop offset="1" stopColor="#f0cb2e" /></linearGradient>
              <linearGradient id="cpB" x1="1" y1="0" x2="0" y2="1"><stop stopColor="#a855f7" /><stop offset="1" stopColor="#f4617c" /></linearGradient>
            </defs>
            <path d="M6 3.500Q7 1 10 1h9q2 0 3 3l1 4h-6q-3 0-4 4l-2 8H3q-4 0-3-4z" fill="url(#cpA)" />
            <path d="M15 1h4q3 0 4 3l1 4h-5z" fill="#2750d8" />
            <path d="M20 8h6q4 0 3 4l-2 9H13l3-10q1-3 4-3z" fill="url(#cpB)" />
          </svg>
          <div className="absolute bottom-0 left-[6px] flex h-[10px] w-[24px] items-center justify-center rounded-[2px] bg-[#ffc40d] text-[8.500px] font-bold text-black">PRE</div>
        </div>
      </div>
    </div>
  );
}

export default function App() {
  return (
    <div className="flex h-[1080px] w-[1920px] flex-col overflow-hidden bg-[#101112] font-['Open_Sans',sans-serif]">
      <TabStrip />
      <Toolbar />
      <Bookmarks />
      <div className="flex h-[869px] font-['Inter',sans-serif]">
        <div className="relative flex w-[1899px] overflow-hidden">
          <Sidebar />
          <div className="pl-[60px]"><Content /></div>
          <SideWidgets />
        </div>
        <Scrollbar />
      </div>
      <Taskbar />
    </div>
  );
}
